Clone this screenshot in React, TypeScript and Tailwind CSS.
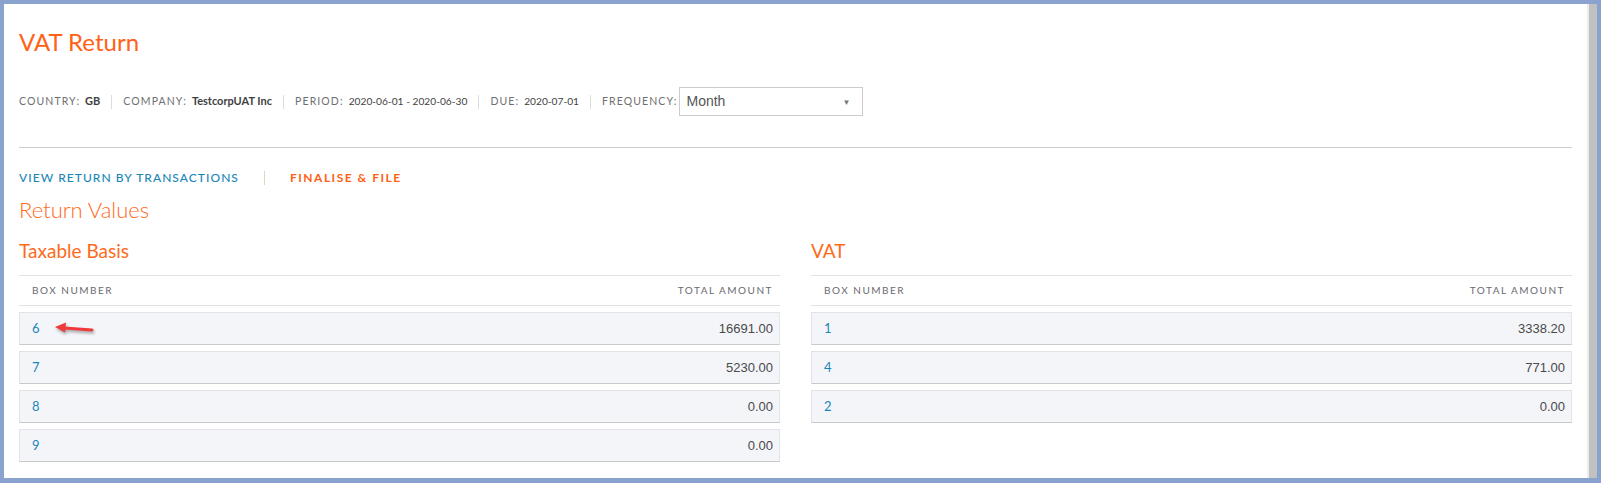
import React from "react";

interface BoxRow {
  box: string;
  amount: string;
}

const taxable: BoxRow[] = [
  { box: "6", amount: "16691.00" },
  { box: "7", amount: "5230.00" },
  { box: "8", amount: "0.00" },
  { box: "9", amount: "0.00" },
];

const vat: BoxRow[] = [
  { box: "1", amount: "3338.20" },
  { box: "4", amount: "771.00" },
  { box: "2", amount: "0.00" },
];

const sans = "font-['Lato','Open_Sans',sans-serif]";

function MetaItem({ label, value, bold }: { label: string; value: string; bold?: boolean }) {
  return (
    <span className="flex items-center">
      <span className="text-[10.5px] tracking-[1.1px] text-[#6f6f6f] uppercase">{label}:</span>
      <span className={`ml-[5px] text-[#3f3f3f] ${bold ? "text-[11px] font-bold" : "text-[10.2px]"}`}>{value}</span>
    </span>
  );
}

function Sep() {
  return <span className="mx-[11px] h-[14px] w-px bg-[#dcdcdc]" />;
}

function Arrow() {
  return (
    <svg
      className="absolute left-[30px] top-[6px] drop-shadow-[1px_2px_1.5px_rgba(0,0,0,0.35)]"
      width="48"
      height="18"
      viewBox="0 0 48 18"
    >
      <path d="M42 11 L14 9" stroke="#f0393b" strokeWidth="3" strokeLinecap="round" />
      <path d="M5 8 L16 3.5 L15 13.5 Z" fill="#f0393b" />
    </svg>
  );
}

function BoxTable({ title, rows }: { title: string; rows: BoxRow[] }) {
  return (
    <div className="flex-1 min-w-0">
      <h3 className="text-[19px] leading-[26px] text-[#ff6a1a] mt-[14px]">{title}</h3>
      <div className="mt-[11px] border-t border-b border-[#e2e2e2] h-[31px] flex items-center justify-between px-[13px] pr-[7px] text-[10px] tracking-[1.5px] text-[#6a6a70] uppercase">
        <span>Box Number</span>
        <span>Total Amount</span>
      </div>
      <div className="mt-[6px] flex flex-col gap-[6px]">
        {rows.map((r) => (
          <div
            key={r.box}
            className="relative h-[33px] bg-[#f4f5f9] border border-[#e2e3e6] border-b-[#c9c9cb] flex items-center justify-between pl-[12px] pr-[6px]"
          >
            <span className="text-[13px] text-[#1b86b8]">{r.box}</span>
            {r.box === "6" && title === "Taxable Basis" && <Arrow />}
            <span className="text-[13px] text-[#4a4a4a] font-['Liberation_Sans',Arial,sans-serif]">{r.amount}</span>
          </div>
        ))}
      </div>
    </div>
  );
}

export default function App() {
  return (
    <div className={`w-[1601px] h-[483px] bg-[#8aa2ce] pt-[4px] pl-[4px] pr-[4px] pb-[5px] flex ${sans}`}>
      <div className="flex-1 bg-white px-[15px] min-w-0">
        <h1 className="mt-[22px] text-[24px] leading-[32px] text-[#ff6116]">VAT Return</h1>

        <div className="mt-[29px] h-[29px] flex items-center">
          <MetaItem label="Country" value="GB" bold />
          <Sep />
          <MetaItem label="Company" value="TestcorpUAT Inc" bold />
          <Sep />
          <MetaItem label="Period" value="2020-06-01 - 2020-06-30" />
          <Sep />
          <MetaItem label="Due" value="2020-07-01" />
          <Sep />
          <span className="text-[10.5px] tracking-[1.1px] text-[#6f6f6f] uppercase">Frequency:</span>
          <div className="ml-[2px] w-[184px] h-[29px] border border-[#cccccc] flex items-center justify-between pl-[6px] pr-[12px]">
            <span className="text-[14px] text-[#555] font-['Liberation_Sans',Arial,sans-serif]">Month</span>
            <span className="text-[8px] text-[#777]">▼</span>
          </div>
        </div>

        <div className="mt-[31px] border-t border-[#cdcdcd]" />

        <div className="mt-[20px] h-[20px] flex items-center text-[12px] uppercase">
          <span className="text-[#1b86b8] font-medium tracking-[1.05px]">View Return by Transactions</span>
          <span className="mx-[25px] h-[14px] w-px bg-[#e3d3c3]" />
          <span className="text-[#ff5f14] font-bold tracking-[1.5px]">Finalise &amp; File</span>
        </div>

        <h2 className="mt-[8px] text-[22px] leading-[28px] font-light text-[#ff6a1a]">Return Values</h2>

        <div className="flex gap-[31px]">
          <BoxTable title="Taxable Basis" rows={taxable} />
          <BoxTable title="VAT" rows={vat} />
        </div>
      </div>
      <div className="w-[2px] bg-[#ececec]" />
      <div className="w-[8px] bg-[#c1c1c1]" />
    </div>
  );
}
